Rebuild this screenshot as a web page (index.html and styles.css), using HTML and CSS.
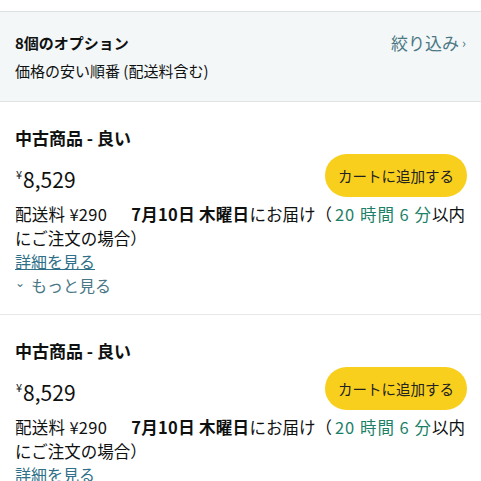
FILE: index.html
```html
<!DOCTYPE html>
<html lang="ja">
<head>
    <meta charset="UTF-8">
    <meta name="viewport" content="width=device-width, initial-scale=1.0">
    <title>出品者一覧</title>
    <link rel="stylesheet" href="styles.css">
</head>
<body>
    <div class="top-strip"></div>

    <div class="options-header">
        <div class="options-text">
            <div class="options-count">8個のオプション</div>
            <div class="options-sort">価格の安い順番 (配送料含む)</div>
        </div>
        <a class="filter-link" href="#">絞り込み<span class="chev">›</span></a>
    </div>

    <div class="offer">
        <div class="offer-title">中古商品 - 良い</div>
        <div class="price-row">
            <div class="price"><span class="yen">¥</span>8,529</div>
            <button class="cart-btn">カートに追加する</button>
        </div>
        <div class="delivery">
            <span class="fee">配送料 ¥290</span><b>7月10日 木曜日</b>にお届け（<span class="countdown">20 時間 6 分</span>以内<span class="nowrap">にご注文の場合）</span>
        </div>
        <a class="details" href="#">詳細を見る</a>
        <a class="more" href="#"><span class="more-chev">⌄</span>もっと見る</a>
    </div>

    <div class="offer">
        <div class="offer-title">中古商品 - 良い</div>
        <div class="price-row">
            <div class="price"><span class="yen">¥</span>8,529</div>
            <button class="cart-btn">カートに追加する</button>
        </div>
        <div class="delivery">
            <span class="fee">配送料 ¥290</span><b>7月10日 木曜日</b>にお届け（<span class="countdown">20 時間 6 分</span>以内<span class="nowrap">にご注文の場合）</span>
        </div>
        <a class="details" href="#">詳細を見る</a>
        <a class="more" href="#"><span class="more-chev">⌄</span>もっと見る</a>
    </div>
</body>
</html>
```

FILE: styles.css
```css
body {
    margin: 0;
    background-color: #fff;
    font-family: "Noto Sans CJK JP", "Noto Sans", sans-serif;
    color: #0f1111;
    overflow: hidden;
}

.top-strip {
    height: 11px;
    border-bottom: 1px solid #dde1e2;
}

.options-header {
    display: flex;
    justify-content: space-between;
    align-items: flex-start;
    padding: 20px 15px 19px;
    background-color: #f3f7f8;
    border-bottom: 1px solid #e0e4e5;
}

.options-count {
    font-size: 15px;
    font-weight: bold;
    line-height: 22px;
}

.options-sort {
    font-size: 15px;
    line-height: 22px;
    margin-top: 6px;
}

.filter-link {
    display: flex;
    align-items: center;
    font-size: 17px;
    line-height: 22px;
    color: #4c7884;
    text-decoration: none;
}

.chev {
    font-size: 13px;
    margin-left: 3px;
}

.offer {
    padding: 24px 15px 17px;
    border-bottom: 1px solid #e7e7e7;
}

.offer-title {
    font-size: 17px;
    font-weight: bold;
    line-height: 24px;
}

.price-row {
    display: flex;
    justify-content: space-between;
    align-items: center;
    margin-top: 4px;
}

.price {
    font-size: 21px;
    line-height: 28px;
    margin-top: 2px;
}

.yen {
    font-size: 11px;
    vertical-align: 9px;
    margin-right: 1px;
    margin-left: 1px;
}

.cart-btn {
    height: 43px;
    width: 142px;
    margin-right: -1px;
    border: none;
    border-radius: 22px;
    background-color: #f8cf1c;
    color: #222;
    font-family: inherit;
    font-size: 14.5px;
}

.delivery {
    margin-top: 5px;
    font-size: 16.5px;
    line-height: 24px;
}

.fee {
    margin-right: 24px;
    letter-spacing: 0.3px;
}

.delivery b {
    font-weight: bold;
    letter-spacing: 0.3px;
}

.countdown {
    color: #1d7f68;
    letter-spacing: 1px;
    margin-left: 3px;
}

.nowrap {
    white-space: nowrap;
}

.details {
    display: block;
    font-size: 16px;
    line-height: 23px;
    color: #2f6f88;
    text-decoration: underline;
}

.more {
    display: flex;
    align-items: center;
    font-size: 16px;
    line-height: 24px;
    color: #4a7786;
    text-decoration: none;
}

.more-chev {
    font-size: 12px;
    margin-right: 6px;
    margin-top: -6px;
}
```
